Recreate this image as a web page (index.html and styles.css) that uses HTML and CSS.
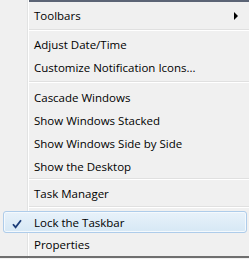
FILE: index.html
```html
<!DOCTYPE html>
<html lang="en">
<head>
    <meta charset="UTF-8">
    <title>Taskbar Menu</title>
<link rel="stylesheet" href="styles.css">
</head>
<body>
    <div class="menu">
        <div class="top-edge"></div>
        <div class="item"><span class="label">Toolbars</span><span class="arrow"></span></div>
        <div class="sep sep-6"></div>
        <div class="item"><span class="label">Adjust Date/Time</span></div>
        <div class="item"><span class="label">Customize Notification Icons...</span></div>
        <div class="sep"></div>
        <div class="item"><span class="label">Cascade Windows</span></div>
        <div class="item"><span class="label">Show Windows Stacked</span></div>
        <div class="item"><span class="label">Show Windows Side by Side</span></div>
        <div class="item short"><span class="label">Show the Desktop</span></div>
        <div class="sep sep-5"></div>
        <div class="item short"><span class="label">Task Manager</span></div>
        <div class="sep"></div>
        <div class="item short checked hover">
            <span class="check">
                <svg width="10" height="10" viewBox="0 0 10 10"><path d="M1 5.2 L3.6 8.4 L9 1.2" fill="none" stroke="#1b3c78" stroke-width="1.8"/></svg>
            </span>
            <span class="label">Lock the Taskbar</span>
        </div>
        <div class="item short"><span class="label">Properties</span></div>
        <div class="bottom-edge"></div>
    </div>
</body>
</html>
```

FILE: styles.css
```css
body {
    margin: 0;
    padding: 0;
    font-family: "Open Sans", Arial, sans-serif;
    font-size: 11.5px;
    color: #000000;
}

.menu {
    width: 249px;
    height: 259px;
    box-sizing: border-box;
    background-color: #f0f0f0;
    position: relative;
    display: flex;
    flex-direction: column;
    padding-top: 4px;
    background-image: linear-gradient(to right, transparent 27px, #e2e3e3 27px, #e2e3e3 28px, #ffffff 28px, #ffffff 29px, transparent 29px);
}

.top-edge {
    height: 2px;
    margin-left: 29px;
    background-color: #5b6475;
    position: absolute;
    top: 0;
    left: 0;
    right: 0;
}

.item {
    height: 23px;
    flex-shrink: 0;
    display: flex;
    align-items: center;
    position: relative;
    margin: 0 2px 0 3px;
    border: 1px solid transparent;
    border-radius: 3px;
    box-sizing: border-box;
}

.item.short {
    height: 22px;
}

.item .label {
    padding-left: 30px;
    flex: 1;
}

.arrow {
    width: 0;
    height: 0;
    border-top: 4px solid transparent;
    border-bottom: 4px solid transparent;
    border-left: 4px solid #000000;
    margin-right: 8px;
}

.sep {
    height: 7px;
    flex-shrink: 0;
    margin-left: 29px;
    background-image: linear-gradient(to bottom, transparent 2px, #e0e0e0 2px, #e0e0e0 3px, #ffffff 3px, #ffffff 4px, transparent 4px);
}

.sep-6 {
    height: 6px;
}

.sep-5 {
    height: 5px;
    background-image: linear-gradient(to bottom, transparent 1px, #e0e0e0 1px, #e0e0e0 2px, #ffffff 2px, #ffffff 3px, transparent 3px);
}

.hover {
    border-color: #aeccea;
    background: linear-gradient(to bottom, #e8f2fa, #d6e8f5);
    box-shadow: inset 0 0 0 1px #f4f9fd;
}

.check {
    position: absolute;
    left: 8px;
    top: 5px;
}

.bottom-edge {
    height: 2px;
    background-color: #6f6f6f;
    position: absolute;
    left: 0;
    right: 0;
    bottom: 1px;
}
```
